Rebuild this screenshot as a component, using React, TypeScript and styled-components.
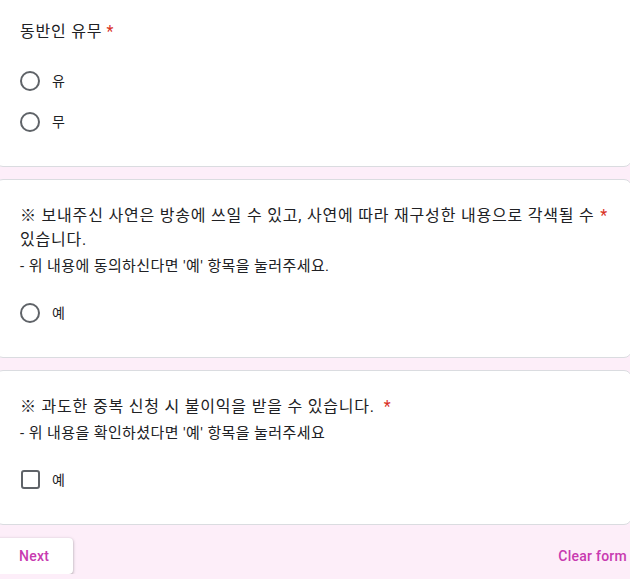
import styled, { createGlobalStyle } from 'styled-components'

const GlobalStyle = createGlobalStyle`
  html, body {
    margin: 0;
    padding: 0;
    background: #fdeef9;
    overflow: hidden;
  }
  body {
    font-family: Roboto, "Noto Sans CJK KR", sans-serif;
    color: #202124;
  }
`

type Option = { label: string }

type Question = {
  title: string
  desc?: string
  kind: 'radio' | 'checkbox'
  options: Option[]
}

const questions: Question[] = [
  {
    title: '동반인 유무',
    kind: 'radio',
    options: [{ label: '유' }, { label: '무' }],
  },
  {
    title: '※ 보내주신 사연은 방송에 쓰일 수 있고, 사연에 따라 재구성한 내용으로 각색될 수 있습니다.',
    desc: "- 위 내용에 동의하신다면 '예' 항목을 눌러주세요.",
    kind: 'radio',
    options: [{ label: '예' }],
  },
  {
    title: '※ 과도한 중복 신청 시 불이익을 받을 수 있습니다.',
    desc: "- 위 내용을 확인하셨다면 '예' 항목을 눌러주세요",
    kind: 'checkbox',
    options: [{ label: '예' }],
  },
]

const App = () => {
  return (
    <Page>
      <GlobalStyle />
      {questions.map((q, i) => (
        <Card key={i}>
          <TitleRow>
            <TitleText>{q.title}</TitleText>
            <Required $gap={i === 2 ? 9 : 4}>*</Required>
          </TitleRow>
          {q.desc && <Desc>{q.desc}</Desc>}
          <Options>
            {q.options.map((o) => (
              <OptionRow key={o.label}>
                <Control>
                  {q.kind === 'radio' ? <RadioCircle /> : <CheckBox />}
                </Control>
                <OptionLabel>{o.label}</OptionLabel>
              </OptionRow>
            ))}
          </Options>
        </Card>
      ))}
      <Footer>
        <NextButton>Next</NextButton>
        <ClearButton>Clear form</ClearButton>
      </Footer>
    </Page>
  )
}

export default App

const Page = styled.div`
  width: 637px;
  margin: -5px 0 0 -5px;
  display: flex;
  flex-direction: column;
  gap: 12px;
`

const Card = styled.div`
  background: #fff;
  border: 1px solid #dadce0;
  border-radius: 8px;
  padding: 24px 23px 24px 24px;
`

const TitleRow = styled.div`
  display: flex;
  align-items: flex-start;
  font-size: 16px;
  line-height: 24px;
  letter-spacing: 0.8px;
  word-break: keep-all;
`

const TitleText = styled.span`
  white-space: pre-wrap;
`

const Required = styled.span<{ $gap: number }>`
  color: #d93025;
  padding-left: ${(p) => p.$gap}px;
  flex-shrink: 0;
`

const Desc = styled.div`
  margin-top: 4px;
  font-size: 15px;
  line-height: 20px;
  letter-spacing: 0.4px;
`

const Options = styled.div`
  margin-top: 16px;
  display: flex;
  flex-direction: column;
`

const OptionRow = styled.div`
  height: 41px;
  display: flex;
  align-items: center;
  gap: 12px;
`

const Control = styled.div`
  width: 20px;
  height: 20px;
  display: flex;
  align-items: center;
  justify-content: center;
`

const RadioCircle = styled.div`
  width: 20px;
  height: 20px;
  box-sizing: border-box;
  border: 2px solid #5f6368;
  border-radius: 50%;
`

const CheckBox = styled.div`
  width: 19px;
  height: 19px;
  box-sizing: border-box;
  border: 2px solid #5f6368;
  border-radius: 3px;
`

const OptionLabel = styled.span`
  font-size: 14px;
  line-height: 20px;
`

const Footer = styled.div`
  display: flex;
  justify-content: space-between;
  align-items: center;
  margin-top: 1px;
`

const NextButton = styled.button`
  height: 36px;
  padding: 0 24px;
  border: none;
  border-radius: 4px;
  background: #fff;
  color: #c83ab0;
  font-family: Roboto, sans-serif;
  font-size: 14px;
  font-weight: 500;
  letter-spacing: 0.25px;
  box-shadow: 0 1px 2px rgba(60, 64, 67, 0.3), 0 1px 3px 1px rgba(60, 64, 67, 0.15);
`

const ClearButton = styled.button`
  height: 36px;
  padding: 0 5px 0 8px;
  border: none;
  background: transparent;
  color: #c83ab0;
  font-family: Roboto, sans-serif;
  font-size: 14px;
  font-weight: 500;
  letter-spacing: 0.25px;
`
